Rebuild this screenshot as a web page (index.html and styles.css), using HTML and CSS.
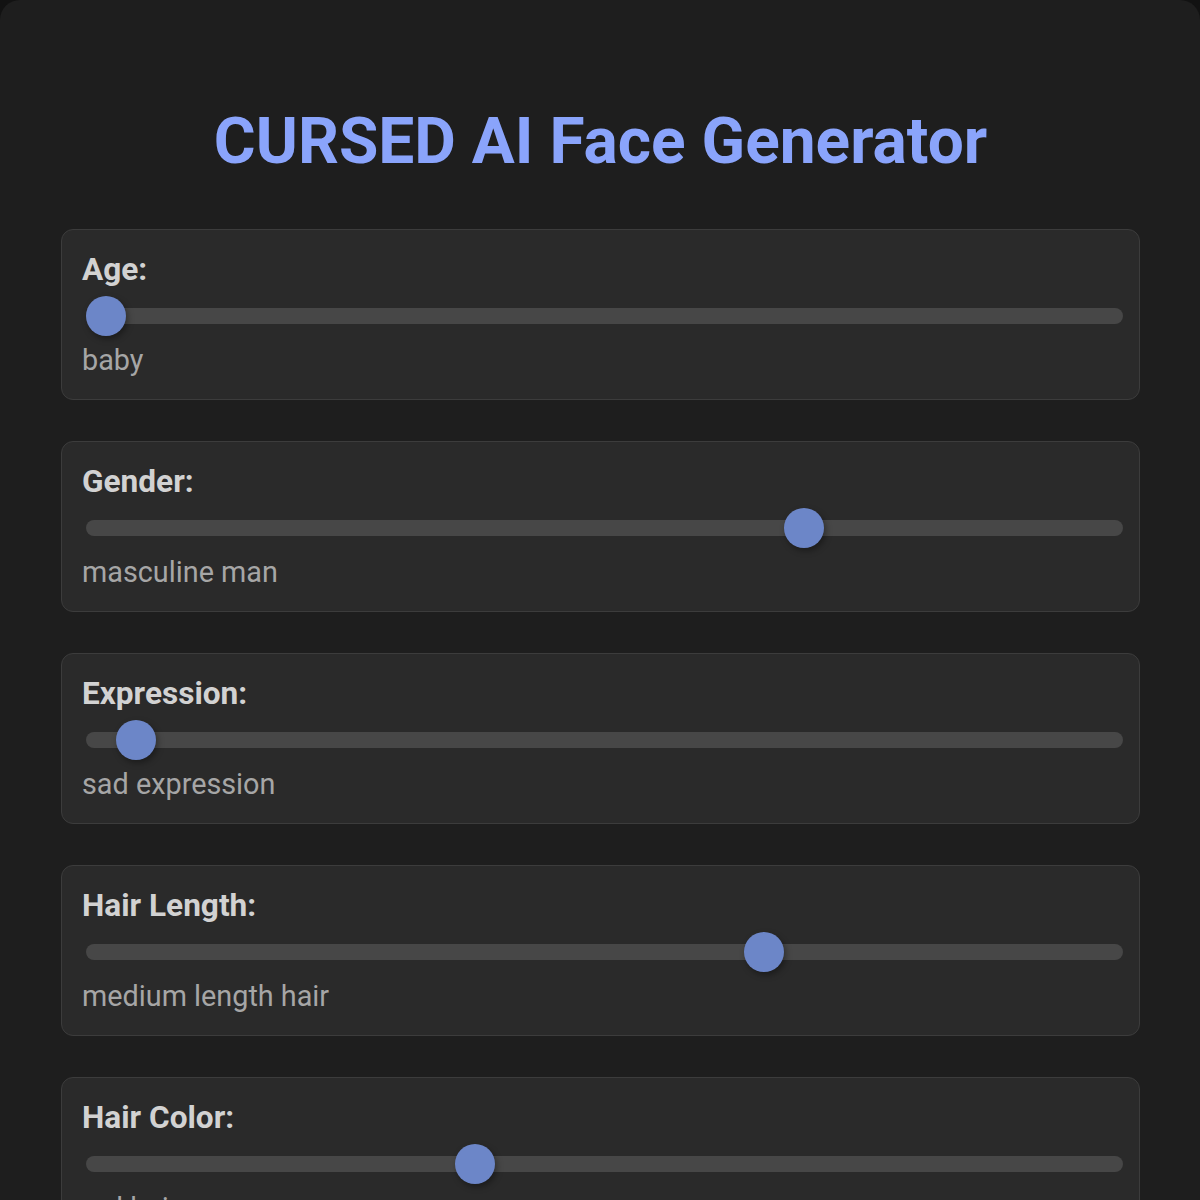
FILE: index.html
```html
<!DOCTYPE html>
<html>
<head>
    <title>CURSED AI Face Generator</title>
    <link rel="stylesheet" href="styles.css">
</head>
<body>
    <div class="container">
        <h1 class="title">CURSED AI Face Generator</h1>

        <div class="control">
            <label class="control-label" for="age">Age:</label>
            <input type="range" class="slider" id="age" min="0" max="100" value="0">
            <div class="control-value">baby</div>
        </div>

        <div class="control">
            <label class="control-label" for="gender">Gender:</label>
            <input type="range" class="slider" id="gender" min="0" max="100" value="70">
            <div class="control-value">masculine man</div>
        </div>

        <div class="control">
            <label class="control-label" for="expression">Expression:</label>
            <input type="range" class="slider" id="expression" min="0" max="100" value="3">
            <div class="control-value">sad expression</div>
        </div>

        <div class="control">
            <label class="control-label" for="hairLength">Hair Length:</label>
            <input type="range" class="slider" id="hairLength" min="0" max="100" value="66">
            <div class="control-value">medium length hair</div>
        </div>

        <div class="control">
            <label class="control-label" for="hairColor">Hair Color:</label>
            <input type="range" class="slider" id="hairColor" min="0" max="100" value="37">
            <div class="control-value">red hair</div>
        </div>
    </div>
</body>
</html>
```

FILE: styles.css
```css
body {
    margin: 0;
    background-color: #121212;
    font-family: Roboto, "Liberation Sans", Arial, sans-serif;
}

.container {
    background-color: #1e1e1e;
    border-radius: 20px;
    padding: 40px 60px 60px 61px;
}

.title {
    margin: 64px 0 50px;
    font-size: 64px;
    font-weight: bold;
    text-align: center;
    color: #8aa4fb;
}

.control {
    background-color: #2a2a2a;
    border: 1px solid #3c3c3c;
    border-radius: 12px;
    padding: 21px 20px 22px;
    margin-bottom: 41px;
}

.control-label {
    display: block;
    font-size: 31.6px;
    font-weight: bold;
    color: #d2d2d2;
    margin-bottom: 20px;
}

.slider {
    -webkit-appearance: none;
    appearance: none;
    display: block;
    width: 100%;
    height: 16px;
    margin: 0 0 0 4px;
    border-radius: 8px;
    background: #474747;
    outline: none;
}

.slider::-webkit-slider-thumb {
    -webkit-appearance: none;
    appearance: none;
    width: 40px;
    height: 40px;
    border-radius: 50%;
    background: #6c86c8;
    box-shadow: 2px 3px 6px rgba(0, 0, 0, 0.35);
    cursor: pointer;
}

.control-value {
    margin-top: 19px;
    font-size: 28.8px;
    color: #a6a6a6;
}
```
